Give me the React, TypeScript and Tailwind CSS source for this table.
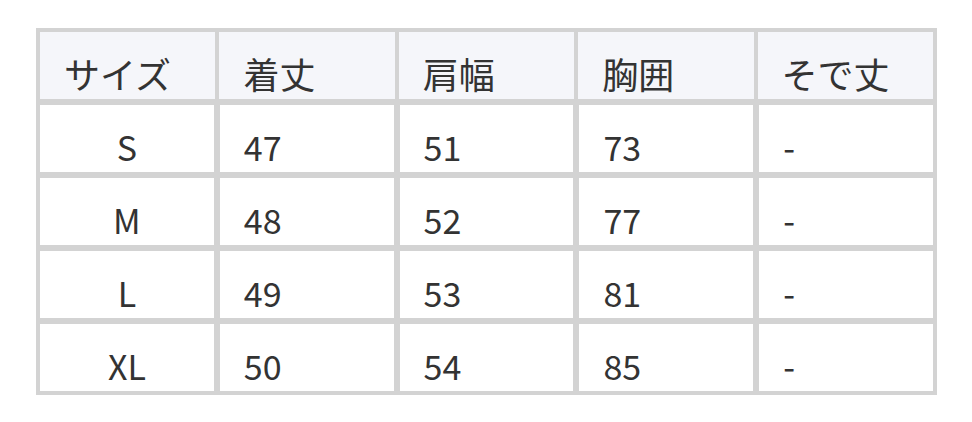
import React from "react";

const headers = ["サイズ", "着丈", "肩幅", "胸囲", "そで丈"];
const rows = [
  ["S", "47", "51", "73", "-"],
  ["M", "48", "52", "77", "-"],
  ["L", "49", "53", "81", "-"],
  ["XL", "50", "54", "85", "-"],
];

export default function App() {
  return (
    <div
      className="w-[972px] h-[422px] bg-white pt-[28px] pl-[36px]"
      style={{ fontFamily: '"Noto Sans CJK JP", "Noto Sans", sans-serif' }}
    >
      <div className="w-[901px] border-[4px] border-[#d3d3d3] bg-[#d3d3d3] flex flex-col gap-[6px] text-[#333333]">
        <div className="grid grid-cols-5 gap-[4px] h-[67px] text-[36px] leading-[44px]">
          {headers.map((h) => (
            <div key={h} className="min-w-0 bg-[#f5f6fa] pl-[24px] pt-[19px]">
              {h}
            </div>
          ))}
        </div>
        {rows.map((r) => (
          <div key={r[0]} className="grid grid-cols-5 gap-[6px] h-[67px] text-[34px] leading-[40px]">
            {r.map((c, i) => (
              <div
                key={i}
                className={
                  "min-w-0 bg-white pt-[22px] " +
                  (i === 0 ? "text-center" : "pl-[24px]")
                }
              >
                {c}
              </div>
            ))}
          </div>
        ))}
      </div>
    </div>
  );
}
